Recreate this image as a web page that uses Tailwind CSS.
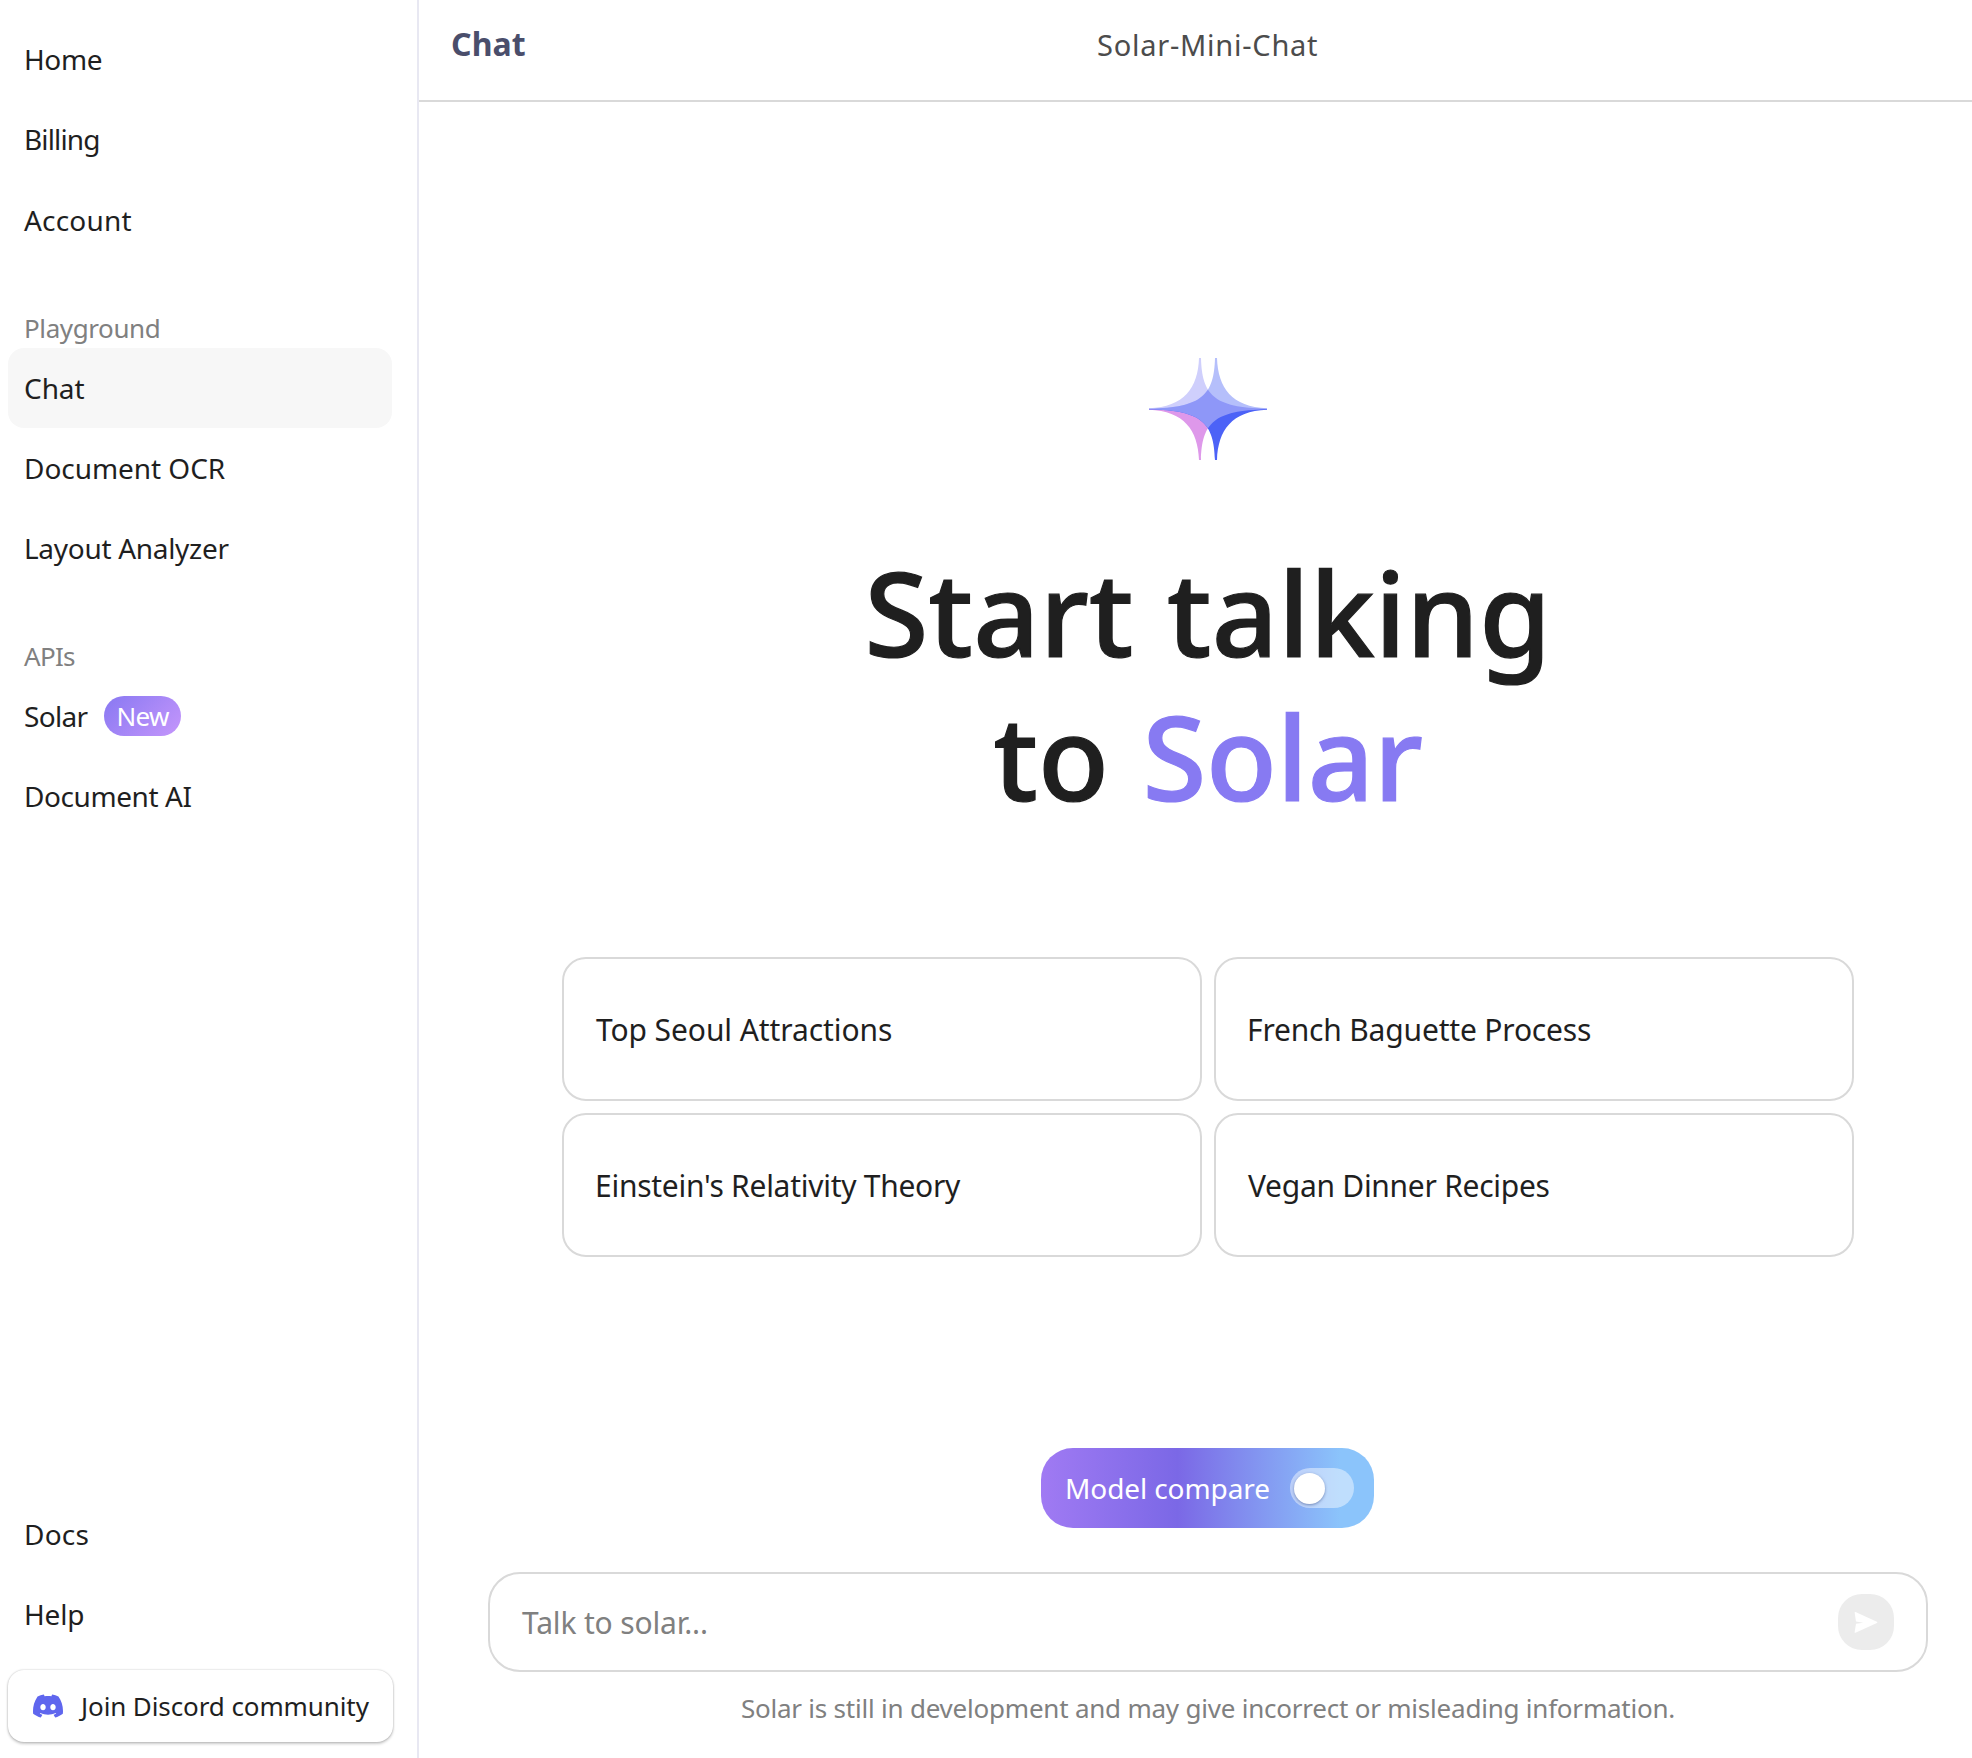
<!DOCTYPE html>
<html lang="en">
<head>
<meta charset="utf-8">
<title>Chat</title>
<script src="https://cdn.jsdelivr.net/npm/@tailwindcss/browser@4"></script>
</head>
<body class="flex h-[1758px] w-[1972px] overflow-hidden bg-white font-['Noto_Sans',sans-serif] text-[#1f1f1f]">

<aside class="flex w-[419px] shrink-0 flex-col border-r-2 border-[#e8e8f2] py-5 pl-2 pr-[25px] text-[28px]">
  <nav class="flex flex-col whitespace-nowrap">
    <a class="flex h-20 items-center pb-0.5 pl-4 tracking-[-0.4px]">Home</a>
    <a class="flex h-20 items-center pb-0.5 pl-4 tracking-[-0.85px]">Billing</a>
    <a class="flex h-20 items-center pb-px pl-4 tracking-[0.2px]">Account</a>

    <h2 class="mt-12 flex h-10 items-center pl-4 text-[26px] tracking-[-0.4px] text-[#808080]">Playground</h2>
    <a class="flex h-20 items-center rounded-2xl bg-[#f7f7f7] pb-px pl-4 tracking-[-0.07px]">Chat</a>
    <a class="flex h-20 items-center pb-px pl-4 tracking-[-0.05px]">Document OCR</a>
    <a class="flex h-20 items-center pb-px pl-4 tracking-[-0.3px]">Layout Analyzer</a>

    <h2 class="mt-12 flex h-10 items-center pl-4 text-[26px] tracking-[-0.7px] text-[#808080]">APIs</h2>
    <a class="flex h-20 items-center pl-4">
      <span class="w-[80px] pb-px tracking-[-0.7px]">Solar</span>
      <span class="flex h-10 w-[77px] items-center justify-center rounded-full bg-linear-[135deg] from-[#8878f2] to-[#c596fb] text-[26px] tracking-[-0.7px] text-white">New</span>
    </a>
    <a class="flex h-20 items-center pb-px pl-4 tracking-[-0.42px]">Document AI</a>
  </nav>

  <nav class="mt-auto flex flex-col whitespace-nowrap">
    <a class="flex h-20 items-center pb-px pl-4 tracking-[0.2px]">Docs</a>
    <a class="flex h-20 items-center pb-px pl-4 tracking-[-0.2px]">Help</a>
    <button class="-mb-1 mt-4 flex h-[72px] w-[385px] items-center rounded-2xl bg-white pl-[25px] text-[26px] tracking-[-0.1px] shadow-[0_0_2px_rgba(0,0,0,0.25),0_2px_3px_rgba(0,0,0,0.2)]">
      <svg class="mr-[18px] size-[30px]" viewBox="0 0 24 24" fill="#5f66ee"><path d="M20.317 4.3698a19.7913 19.7913 0 0 0-4.8851-1.5152.0741.0741 0 0 0-.0785.0371c-.211.3753-.4447.8648-.6083 1.2495-1.8447-.2762-3.68-.2762-5.4868 0-.1636-.3933-.4058-.8742-.6177-1.2495a.077.077 0 0 0-.0785-.037 19.7363 19.7363 0 0 0-4.8852 1.515.0699.0699 0 0 0-.0321.0277C.5334 9.0458-.319 13.5799.0992 18.0578a.0824.0824 0 0 0 .0312.0561c2.0528 1.5076 4.0413 2.4228 5.9929 3.0294a.0777.0777 0 0 0 .0842-.0276c.4616-.6304.8731-1.2952 1.226-1.9942a.076.076 0 0 0-.0416-.1057c-.6528-.2476-1.2743-.5495-1.8722-.8923a.077.077 0 0 1-.0076-.1277c.1258-.0943.2517-.1923.3718-.2914a.0743.0743 0 0 1 .0776-.0105c3.9278 1.7933 8.18 1.7933 12.0614 0a.0739.0739 0 0 1 .0785.0095c.1202.099.246.1981.3728.2924a.077.077 0 0 1-.0066.1276 12.2986 12.2986 0 0 1-1.873.8914.0766.0766 0 0 0-.0407.1067c.3604.698.7719 1.3628 1.225 1.9932a.076.076 0 0 0 .0842.0286c1.961-.6067 3.9495-1.5219 6.0023-3.0294a.077.077 0 0 0 .0313-.0552c.5004-5.177-.8382-9.6739-3.5485-13.6604a.061.061 0 0 0-.0312-.0286zM8.02 15.3312c-1.1825 0-2.1569-1.0857-2.1569-2.419 0-1.3332.9555-2.4189 2.157-2.4189 1.2108 0 2.1757 1.0952 2.1568 2.419 0 1.3332-.9555 2.4189-2.1569 2.4189zm7.9748 0c-1.1825 0-2.1569-1.0857-2.1569-2.419 0-1.3332.9554-2.4189 2.1569-2.4189 1.2108 0 2.1757 1.0952 2.1568 2.419 0 1.3332-.946 2.4189-2.1568 2.4189Z"/></svg>
      <span>Join Discord community</span>
    </button>
  </nav>
</aside>

<main class="flex min-w-0 grow flex-col">
  <header class="flex h-[102px] shrink-0 items-center whitespace-nowrap border-b-2 border-[#d9d9d9] pb-[13px] pl-8">
    <h1 class="w-[646px] text-[32px] font-bold tracking-[0.1px] text-[#4a4e6b]">Chat</h1>
    <span class="pt-0.5 text-[29px] tracking-[0.75px] text-[#4c4c4c]">Solar-Mini-Chat</span>
  </header>

  <section class="ml-[69px] flex w-[1440px] flex-col items-center">
    <svg class="mt-64 h-[102px] w-[118px]" viewBox="0 0 118 102">
      <defs>
        <clipPath id="rightStar"><path d="M66 0H68C69 30 83 50 118 50.5V51.5C83 52 69 72 68 102H66C65 66 54 52 0 51.5V50.5C54 50 65 36 66 0Z"/></clipPath>
      </defs>
      <path fill="#cfcffc" d="M50 0H52C53 36 64 50 118 50.5V51H0V50.3C35 49 49 30 50 0Z"/>
      <path fill="#de98ea" d="M50 102H52C53 66 64 52 118 51.5V51H0V51.7C35 53 49 72 50 102Z"/>
      <path fill="#b5bffb" d="M66 0H68C69 30 83 49 118 50.3V51H0V50.5C54 50 65 36 66 0Z"/>
      <path fill="#4c62f7" d="M66 102H68C69 72 83 53 118 51.7V51H0V51.5C54 52 65 66 66 102Z"/>
      <path fill="#8e97f8" clip-path="url(#rightStar)" d="M50 0H52C53 36 64 50 118 50.5V51.5C64 52 53 66 52 102H50C49 72 35 52 0 51.5V50.5C35 50 49 30 50 0Z"/>
    </svg>

    <h2 class="mt-20 text-center text-[116px] font-medium leading-[144px] tracking-[0.2px] [-webkit-text-stroke:1.2px] [word-spacing:3px]">Start talking<br>to <span class="tracking-[-0.3px] text-[#877af2]">Solar</span></h2>

    <div class="mt-[129px] grid w-[1292px] grid-cols-2 gap-3 whitespace-nowrap text-[30px]">
      <button class="flex h-36 items-center rounded-3xl border-2 border-[#d9d9d9] pl-8 tracking-[-0.09px]">Top Seoul Attractions</button>
      <button class="flex h-36 items-center rounded-3xl border-2 border-[#d9d9d9] pl-[31px] tracking-[-0.18px]">French Baguette Process</button>
      <button class="flex h-36 items-center rounded-3xl border-2 border-[#d9d9d9] pl-[31px] tracking-[-0.27px]">Einstein's Relativity Theory</button>
      <button class="flex h-36 items-center rounded-3xl border-2 border-[#d9d9d9] pl-8 tracking-[-0.28px]">Vegan Dinner Recipes</button>
    </div>

    <div class="mr-px mt-[191px] flex h-20 w-[333px] items-center justify-between whitespace-nowrap rounded-4xl bg-linear-[90deg] from-[#a07af3] from-0% via-[#7b68e6] via-41% to-[#8bc4fb] to-90% pl-6 pr-5 text-[28px] text-white">
      <span class="pb-px tracking-[-0.1px]">Model compare</span>
      <span class="flex h-10 w-16 items-center rounded-full bg-white/45 pl-1">
        <span class="size-[31px] rounded-full bg-white shadow-[0_1px_3px_rgba(40,60,120,0.5)]"></span>
      </span>
    </div>

    <div class="mt-11 flex h-[100px] w-full items-center justify-between rounded-4xl border-2 border-[#d9d9d9] px-8 text-[30px]">
      <span class="tracking-[-0.15px] text-[#808080]">Talk to solar...</span>
      <button class="flex size-14 items-center justify-center rounded-3xl bg-[#ececec]">
        <svg class="h-[21px] w-6" viewBox="0 0 24 21" fill="#fff"><path d="M0.6 0.6C0.6 0 1-.1 1.5.1L22.9 9.7C23.6 10.1 23.6 10.6 22.9 11L1.5 20.7C1 20.9.6 20.8.6 20.2L2 11.7 9.2 10.7 2 9.5Z"/></svg>
      </button>
    </div>

    <p class="mt-[17px] whitespace-nowrap text-[26px] tracking-[-0.22px] text-[#808080]">Solar is still in development and may give incorrect or misleading information.</p>
  </section>
</main>

</body>
</html>
